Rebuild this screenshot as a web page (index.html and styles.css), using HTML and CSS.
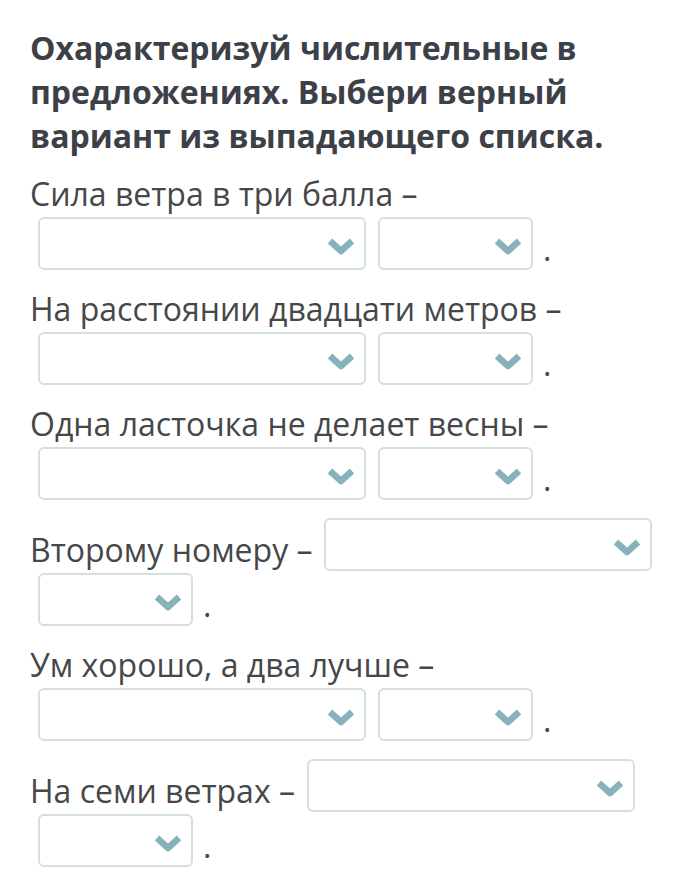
FILE: index.html
```html
<!DOCTYPE html>
<html lang="ru">
<head>
<meta charset="utf-8">
<link rel="stylesheet" href="styles.css">
</head>
<body>
<h1 class="title">Охарактеризуй числительные в предложениях. Выбери верный вариант из выпадающего списка.</h1>

<div class="q">
  <span class="txt">Сила ветра в три балла –</span>
  <span class="sel wide"><svg class="chev" viewBox="0 0 30 18"><path d="M4 4 L15 14 L26 4"/></svg></span>
  <span class="sel narrow"><svg class="chev" viewBox="0 0 30 18"><path d="M4 4 L15 14 L26 4"/></svg></span>
  <span class="dot">.</span>
</div>

<div class="q">
  <span class="txt">На расстоянии двадцати метров –</span>
  <span class="sel wide"><svg class="chev" viewBox="0 0 30 18"><path d="M4 4 L15 14 L26 4"/></svg></span>
  <span class="sel narrow"><svg class="chev" viewBox="0 0 30 18"><path d="M4 4 L15 14 L26 4"/></svg></span>
  <span class="dot">.</span>
</div>

<div class="q">
  <span class="txt">Одна ласточка не делает весны –</span>
  <span class="sel wide"><svg class="chev" viewBox="0 0 30 18"><path d="M4 4 L15 14 L26 4"/></svg></span>
  <span class="sel narrow"><svg class="chev" viewBox="0 0 30 18"><path d="M4 4 L15 14 L26 4"/></svg></span>
  <span class="dot">.</span>
</div>

<div class="q">
  <span class="txt">Второму номеру –</span>
  <span class="sel wide"><svg class="chev" viewBox="0 0 30 18"><path d="M4 4 L15 14 L26 4"/></svg></span>
  <span class="sel narrow"><svg class="chev" viewBox="0 0 30 18"><path d="M4 4 L15 14 L26 4"/></svg></span>
  <span class="dot">.</span>
</div>

<div class="q">
  <span class="txt">Ум хорошо, а два лучше –</span>
  <span class="sel wide"><svg class="chev" viewBox="0 0 30 18"><path d="M4 4 L15 14 L26 4"/></svg></span>
  <span class="sel narrow"><svg class="chev" viewBox="0 0 30 18"><path d="M4 4 L15 14 L26 4"/></svg></span>
  <span class="dot">.</span>
</div>

<div class="q">
  <span class="txt">На семи ветрах –</span>
  <span class="sel wide"><svg class="chev" viewBox="0 0 30 18"><path d="M4 4 L15 14 L26 4"/></svg></span>
  <span class="sel narrow"><svg class="chev" viewBox="0 0 30 18"><path d="M4 4 L15 14 L26 4"/></svg></span>
  <span class="dot">.</span>
</div>
</body>
</html>
```

FILE: styles.css
```css
html, body {
  margin: 0;
  background: #ffffff;
}

body {
  padding: 26px 30px 0 30px;
  font-family: "Open Sans", "Noto Sans", sans-serif;
  color: #454749;
}

.title {
  margin: 0 0 14px 0;
  font-size: 32px;
  line-height: 44px;
  font-weight: 700;
  color: #3c4047;
}

.q {
  display: flex;
  flex-wrap: wrap;
  align-items: flex-end;
  margin-bottom: 16px;
  font-size: 32px;
  line-height: 44px;
}

.txt {
  white-space: nowrap;
  margin-right: 4px;
}

.sel {
  box-sizing: border-box;
  height: 53px;
  margin: 1px 4px 1px 8px;
  border: 2px solid #d3e0e0;
  border-radius: 6px;
  background: #ffffff;
  display: flex;
  align-items: center;
  justify-content: flex-end;
  padding-right: 8px;
  padding-top: 4px;
}

.wide {
  width: 328px;
}

.narrow {
  width: 155px;
}

.chev {
  width: 30px;
  height: 18px;
  display: block;
}

.chev path {
  fill: none;
  stroke: #88b2bb;
  stroke-width: 6.5;
  stroke-linecap: butt;
  stroke-linejoin: round;
}

.dot {
  margin-left: 6px;
}
```
